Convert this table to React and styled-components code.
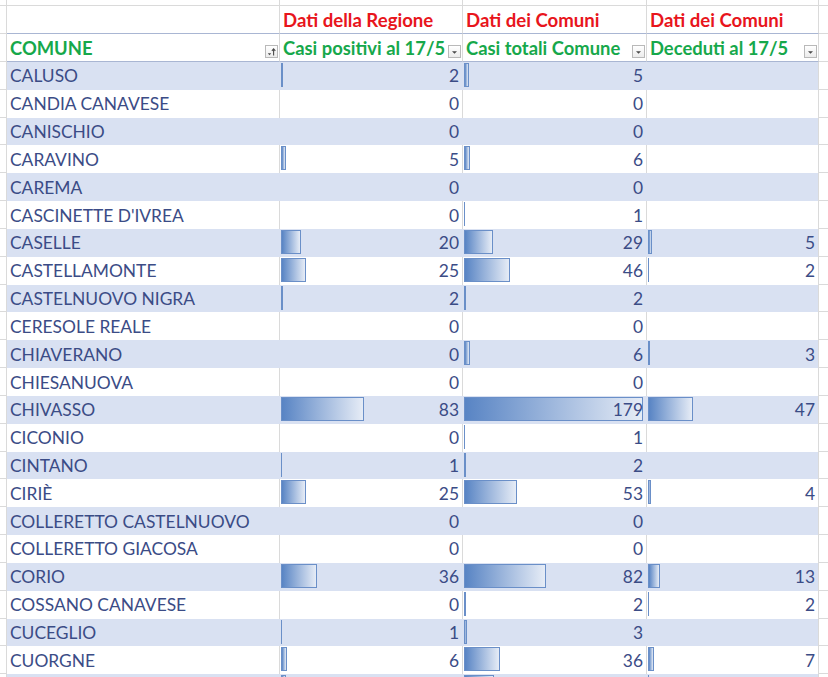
import React from "react";
import styled, { createGlobalStyle } from "styled-components";

const GRID = "#DADADA";
const BAND = "#D9E1F2";
const TABLE_LINE = "#A9B6D3";
const INK = "#3B4C86";
const COLS = "7px 273px 183px 184px 172px 1fr";
const ROW_H = 27.83;

const Global = createGlobalStyle`
  html, body { margin: 0; padding: 0; background: #fff; overflow: hidden; }
  body { font-family: Lato, "Liberation Sans", sans-serif; }
`;

const Sheet = styled.div`
  display: flex;
  flex-direction: column;
  width: 828px;
`;

const Row = styled.div`
  display: grid;
  grid-template-columns: ${COLS};
  height: ${(p) => p.$h}px;
  flex: none;
`;

const Gutter = styled.div`
  box-sizing: border-box;
  border-right: 1px solid ${GRID};
  border-bottom: 1px solid ${GRID};
`;

const Spare = styled.div`
  box-sizing: border-box;
  border-bottom: 1px solid ${GRID};
`;

const Blank = styled.div`
  box-sizing: border-box;
  border-right: 1px solid ${GRID};
  border-bottom: 1px solid ${GRID};
`;

const TitleCell = styled.div`
  box-sizing: border-box;
  border-right: 1px solid ${GRID};
  border-bottom: 1px solid ${TABLE_LINE};
  display: flex;
  align-items: center;
  padding: 0 3px;
  color: #e8151c;
  font-weight: 700;
  font-size: 18.6px;
  white-space: nowrap;
  overflow: hidden;
`;

const HeadCell = styled.div`
  box-sizing: border-box;
  border-right: 1px solid ${GRID};
  border-bottom: 1px solid ${TABLE_LINE};
  display: flex;
  align-items: center;
  justify-content: space-between;
  padding: 0 1px 0 3px;
  color: #16a84b;
  font-weight: 700;
  font-size: 18.4px;
  white-space: nowrap;
  overflow: hidden;
`;

const FilterBtn = styled.span`
  width: 13px;
  height: 13px;
  box-sizing: border-box;
  border: 1px solid #b9b9b9;
  background: linear-gradient(#ffffff, #ececec);
  display: flex;
  align-items: center;
  justify-content: center;
  align-self: flex-end;
  margin-bottom: 3px;
  flex: none;
`;

const DataCell = styled.div`
  box-sizing: border-box;
  position: relative;
  display: flex;
  align-items: center;
  justify-content: ${(p) => (p.$num ? "flex-end" : "flex-start")};
  padding: 0 3px;
  background: ${(p) => (p.$band ? BAND : "#fff")};
  border-right: 1px solid ${(p) => (p.$band && !p.$edge ? BAND : GRID)};
  color: ${INK};
  font-size: 17.4px;
  white-space: nowrap;
  overflow: hidden;
`;

const Value = styled.span`
  position: relative;
  z-index: 1;
`;

const Bar = styled.div`
  position: absolute;
  left: 1px;
  top: 1px;
  height: 24px;
  box-sizing: border-box;
  border: 1px solid #6a8fc8;
  background: linear-gradient(to right, #5884c4, #e6ecf6);
`;

const rows = [
  ["CALUSO", 2, 5, null],
  ["CANDIA CANAVESE", 0, 0, null],
  ["CANISCHIO", 0, 0, null],
  ["CARAVINO", 5, 6, null],
  ["CAREMA", 0, 0, null],
  ["CASCINETTE D'IVREA", 0, 1, null],
  ["CASELLE", 20, 29, 5],
  ["CASTELLAMONTE", 25, 46, 2],
  ["CASTELNUOVO NIGRA", 2, 2, null],
  ["CERESOLE REALE", 0, 0, null],
  ["CHIAVERANO", 0, 6, 3],
  ["CHIESANUOVA", 0, 0, null],
  ["CHIVASSO", 83, 179, 47],
  ["CICONIO", 0, 1, null],
  ["CINTANO", 1, 2, null],
  ["CIRIÈ", 25, 53, 4],
  ["COLLERETTO CASTELNUOVO", 0, 0, null],
  ["COLLERETTO GIACOSA", 0, 0, null],
  ["CORIO", 36, 82, 13],
  ["COSSANO CANAVESE", 0, 2, 2],
  ["CUCEGLIO", 1, 3, null],
  ["CUORGNE", 6, 36, 7],
];

const barB = (v) => v;
const barC = (v) => Math.min(181, v);
const barD = (v) => Math.max(1, Math.round((v - 1) * 0.98));

function NumCell({ value, band, scale, edge, showValue = true }) {
  const w = value ? scale(value) : 0;
  return (
    <DataCell $num $band={band} $edge={edge}>
      {w > 0 && (
        <Bar
          style={{
            width: `${w}px`,
            ...(w <= 2 ? { background: "#6a8fc8", border: "none" } : null),
          }}
        />
      )}
      {showValue && value !== null && <Value>{value}</Value>}
    </DataCell>
  );
}

function SortGlyph() {
  return (
    <svg width="11" height="11" viewBox="0 0 11 11">
      <path d="M1.8 7.2h3.4L3.5 9.2z" fill="#4a4a4a" />
      <path d="M7.6 9.5V3.2" stroke="#4a4a4a" strokeWidth="1.1" fill="none" />
      <path d="M5.9 4.9L7.6 2.8 9.3 4.9" stroke="#4a4a4a" strokeWidth="1.1" fill="none" />
    </svg>
  );
}

function DropGlyph() {
  return (
    <svg width="11" height="11" viewBox="0 0 11 11">
      <path d="M3 5.2h5L5.5 7.8z" fill="#4a4a4a" />
    </svg>
  );
}

export default function App() {
  return (
    <>
      <Global />
      <Sheet>
        <Row $h={6}>
          <Gutter />
          <Blank />
          <Blank />
          <Blank />
          <Blank />
          <Spare />
        </Row>
        <Row $h={28}>
          <Gutter />
          <TitleCell />
          <TitleCell>Dati della Regione</TitleCell>
          <TitleCell>Dati dei Comuni</TitleCell>
          <TitleCell>Dati dei Comuni</TitleCell>
          <Spare />
        </Row>
        <Row $h={28}>
          <Gutter />
          <HeadCell>
            <span>COMUNE</span>
            <FilterBtn>
              <SortGlyph />
            </FilterBtn>
          </HeadCell>
          <HeadCell>
            <span>Casi positivi al 17/5</span>
            <FilterBtn>
              <DropGlyph />
            </FilterBtn>
          </HeadCell>
          <HeadCell>
            <span>Casi totali Comune</span>
            <FilterBtn>
              <DropGlyph />
            </FilterBtn>
          </HeadCell>
          <HeadCell>
            <span>Deceduti al 17/5</span>
            <FilterBtn>
              <DropGlyph />
            </FilterBtn>
          </HeadCell>
          <Spare />
        </Row>
        {rows.map(([name, b, c, d], i) => {
          const band = i % 2 === 0;
          return (
            <Row key={name} $h={ROW_H}>
              <Gutter />
              <DataCell $band={band}>{name}</DataCell>
              <NumCell value={b} band={band} scale={barB} />
              <NumCell value={c} band={band} scale={barC} />
              <NumCell value={d} band={band} scale={barD} edge />
              <Spare />
            </Row>
          );
        })}
        <Row $h={ROW_H}>
          <Gutter />
          <DataCell $band />
          <NumCell value={5} band scale={barB} showValue={false} />
          <NumCell value={30} band scale={barC} showValue={false} />
          <NumCell value={2} band scale={barD} edge showValue={false} />
          <Spare />
        </Row>
      </Sheet>
    </>
  );
}
